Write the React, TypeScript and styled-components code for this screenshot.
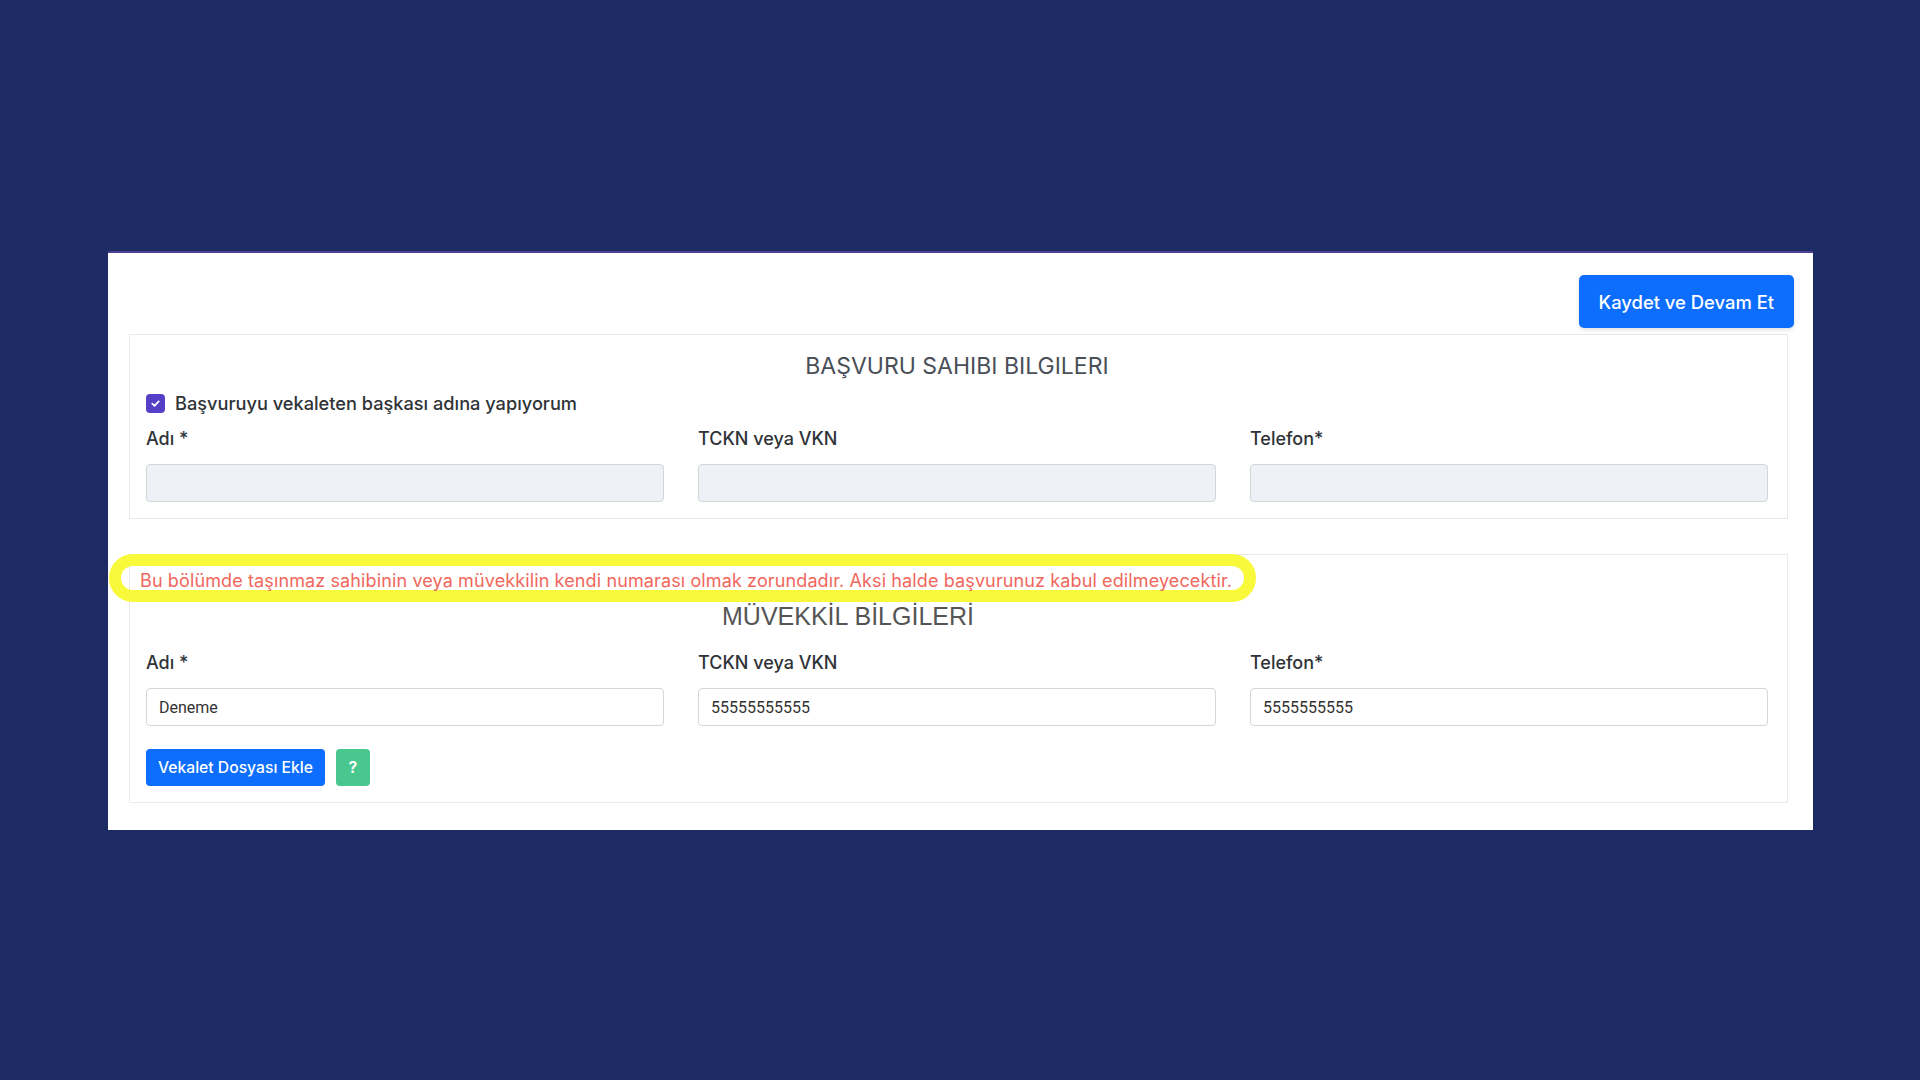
import React from 'react';
import styled, { createGlobalStyle } from 'styled-components';

const GlobalStyle = createGlobalStyle`
  * {
    box-sizing: border-box;
  }
  body {
    margin: 0;
    background: #1c2b64;
    font-family: Inter, 'Noto Sans', sans-serif;
  }
`;

const Page = styled.div`
  min-height: 1080px;
  padding: 251px 107px 0 108px;
`;

const Card = styled.div`
  position: relative;
  background: #ffffff;
  border-top: 2px solid #4d3f95;
  padding: 22px 25px 27px 21px;
`;

const Toolbar = styled.div`
  display: flex;
  justify-content: flex-end;
  margin-right: -6px;
  margin-bottom: 6px;
`;

const PrimaryButton = styled.button`
  height: 53px;
  padding: 0 20px;
  border: none;
  border-radius: 5px;
  background: #0d6efd;
  color: #ffffff;
  font-family: Inter, sans-serif;
  font-size: 18.4px;
  font-weight: 500;
  box-shadow: 0 2px 4px rgba(0, 0, 0, 0.12);
  cursor: pointer;
`;

const Section = styled.section<{ $top: number }>`
  position: relative;
  border: 1px solid #e7e9ed;
  padding: ${({ $top }) => $top}px 19px 16px 16px;
  & + & {
    margin-top: 35px;
  }
`;

const Title = styled.h2`
  margin: 0;
  text-align: center;
  font-family: Inter, sans-serif;
  font-size: 23px;
  line-height: 26px;
  font-weight: 400;
  color: #4a4f58;
`;

const ClientTitle = styled.h2`
  margin: 10px 0 0;
  padding-right: 218px;
  text-align: center;
  font-family: 'Liberation Sans', Arial, sans-serif;
  font-size: 25px;
  line-height: 26px;
  font-weight: 400;
  color: #555555;
`;

const CheckRow = styled.label`
  display: flex;
  align-items: center;
  gap: 10px;
  height: 22px;
  margin-top: 13px;
  font-size: 18.2px;
  font-weight: 500;
  color: #2f3337;
`;

const CheckBox = styled.span`
  display: inline-flex;
  align-items: center;
  justify-content: center;
  width: 19px;
  height: 19px;
  border-radius: 4px;
  background: #5340c6;
`;

const Grid = styled.div<{ $top: number }>`
  display: grid;
  grid-template-columns: repeat(3, 1fr);
  column-gap: 34px;
  margin-top: ${({ $top }) => $top}px;
`;

const Field = styled.div`
  display: flex;
  flex-direction: column;
  gap: 14px;
`;

const Label = styled.label`
  font-size: 18px;
  line-height: 22px;
  font-weight: 500;
  color: #2f3337;
`;

const Input = styled.input<{ $disabled?: boolean }>`
  height: 38px;
  width: 100%;
  padding: 0 12px;
  border: 1px solid #d3d7dd;
  border-radius: 4px;
  background: ${({ $disabled }) => ($disabled ? '#eef1f5' : '#ffffff')};
  font-family: Roboto, sans-serif;
  font-size: 16px;
  color: #333333;
  outline: none;
`;

const Warning = styled.p`
  position: relative;
  margin: 0 0 0 -6px;
  font-family: Inter, sans-serif;
  font-size: 18px;
  line-height: 24px;
  letter-spacing: 0.12px;
  color: #f0675b;
`;

const Highlight = styled.span`
  position: absolute;
  left: -21px;
  top: -1px;
  width: 1147px;
  height: 48px;
  border: 12px solid #f9f93c;
  border-radius: 24px;
  pointer-events: none;
`;

const Actions = styled.div`
  display: flex;
  gap: 11px;
  margin-top: 23px;
`;

const SmallButton = styled.button<{ $variant: 'primary' | 'success' }>`
  height: 37px;
  padding: 0 12px;
  border: none;
  border-radius: 4px;
  background: ${({ $variant }) => ($variant === 'primary' ? '#0d6efd' : '#48c78e')};
  color: #ffffff;
  font-family: Inter, sans-serif;
  font-size: 15.7px;
  font-weight: ${({ $variant }) => ($variant === 'primary' ? 500 : 700)};
  min-width: 34px;
  cursor: pointer;
`;

const Check = () => (
  <svg width="11" height="11" viewBox="0 0 12 12" fill="none">
    <path d="M2.5 6.2l2.4 2.4 4.6-5" stroke="#fff" strokeWidth="1.9" strokeLinecap="round" strokeLinejoin="round" />
  </svg>
);

const applicantFields = ['Adı *', 'TCKN veya VKN', 'Telefon*'];
const clientFields = [
  { label: 'Adı *', value: 'Deneme' },
  { label: 'TCKN veya VKN', value: '55555555555' },
  { label: 'Telefon*', value: '5555555555' },
];

export default function App() {
  return (
    <>
      <GlobalStyle />
      <Page>
        <Card>
          <Toolbar>
            <PrimaryButton>Kaydet ve Devam Et</PrimaryButton>
          </Toolbar>

          <Section $top={18}>
            <Title>BAŞVURU SAHIBI BILGILERI</Title>
            <CheckRow>
              <CheckBox>
                <Check />
              </CheckBox>
              Başvuruyu vekaleten başkası adına yapıyorum
            </CheckRow>
            <Grid $top={14}>
              {applicantFields.map((label) => (
                <Field key={label}>
                  <Label>{label}</Label>
                  <Input $disabled readOnly />
                </Field>
              ))}
            </Grid>
          </Section>

          <Section $top={14}>
            <Highlight />
            <Warning>
              Bu bölümde taşınmaz sahibinin veya müvekkilin kendi numarası olmak zorundadır. Aksi halde başvurunuz
              kabul edilmeyecektir.
            </Warning>
            <ClientTitle>MÜVEKKİL BİLGİLERİ</ClientTitle>
            <Grid $top={23}>
              {clientFields.map((f) => (
                <Field key={f.label}>
                  <Label>{f.label}</Label>
                  <Input defaultValue={f.value} readOnly />
                </Field>
              ))}
            </Grid>
            <Actions>
              <SmallButton $variant="primary">Vekalet Dosyası Ekle</SmallButton>
              <SmallButton $variant="success">?</SmallButton>
            </Actions>
          </Section>
        </Card>
      </Page>
    </>
  );
}
